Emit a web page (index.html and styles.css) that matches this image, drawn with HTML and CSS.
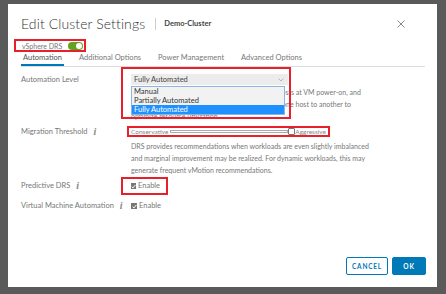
FILE: index.html
```html
<!DOCTYPE html>
<html lang="en">

<head>
  <meta charset="UTF-8">
  <title>Edit Cluster Settings</title>
  <link rel="stylesheet" href="styles.css">
</head>

<body>
  <div class="modal">
    <!-- Header -->
    <header class="modal-header">
      <h1>Edit Cluster Settings</h1>
      <span class="divider"></span>
      <span class="cluster-name">Demo-Cluster</span>
      <button class="close" aria-label="Close">
        <svg width="8" height="8" viewBox="0 0 8 8"><path d="M0.5 0.5 L7.5 7.5 M7.5 0.5 L0.5 7.5" stroke="#8c8c8c" stroke-width="1" fill="none"/></svg>
      </button>
    </header>

    <!-- DRS switch -->
    <div class="drs-toggle">
      <span>vSphere DRS</span>
      <span class="switch"><span class="knob"></span></span>
    </div>

    <!-- Tabs -->
    <nav class="tabs">
      <span class="tab active">Automation</span>
      <span class="tab">Additional Options</span>
      <span class="tab">Power Management</span>
      <span class="tab">Advanced Options</span>
    </nav>

    <!-- Form -->
    <div class="form">
      <div class="row">
        <label class="row-label">Automation Level</label>
        <div class="control level">
          <div class="select">
            <span>Fully Automated</span>
            <svg width="6" height="4" viewBox="0 0 6 4"><path d="M0.5 0.5 L3 3 L5.5 0.5" stroke="#aaa" stroke-width="0.8" fill="none"/></svg>
          </div>
          <p class="desc">DRS automatically places virtual machines onto hosts at VM power-on, and<br>virtual machines are automatically migrated from one host to another to<br>optimize resource utilization.</p>
          <ul class="listbox">
            <li>Manual</li>
            <li>Partially Automated</li>
            <li class="selected">Fully Automated</li>
          </ul>
          <span class="mark-level"></span>
        </div>
      </div>

      <div class="row row-threshold">
        <label class="row-label">Migration Threshold <i class="info">i</i></label>
        <div class="control">
          <div class="slider">
            <span class="slider-end">Conservative</span>
            <span class="track"></span>
            <span class="thumb"></span>
            <span class="slider-end">Aggressive</span>
          </div>
          <p class="desc">DRS provides recommendations when workloads are even slightly imbalanced and marginal improvement may be realized. For dynamic workloads, this may generate frequent vMotion recommendations.</p>
        </div>
      </div>

      <div class="row row-predictive">
        <label class="row-label">Predictive DRS <i class="info">i</i></label>
        <div class="control">
          <span class="check marked"><span class="box">
            <svg width="5" height="5" viewBox="0 0 5 5"><path d="M0.7 2.6 L2 3.9 L4.4 0.9" stroke="#fff" stroke-width="1" fill="none"/></svg>
          </span>Enable</span>
        </div>
      </div>

      <div class="row row-vm">
        <label class="row-label">Virtual Machine Automation <i class="info">i</i></label>
        <div class="control">
          <span class="check"><span class="box">
            <svg width="5" height="5" viewBox="0 0 5 5"><path d="M0.7 2.6 L2 3.9 L4.4 0.9" stroke="#fff" stroke-width="1" fill="none"/></svg>
          </span>Enable</span>
        </div>
      </div>
    </div>

    <!-- Footer -->
    <footer class="modal-footer">
      <button class="btn btn-outline">CANCEL</button>
      <button class="btn btn-primary">OK</button>
    </footer>
  </div>
</body>

</html>
```

FILE: styles.css
```css
/* General Styles */
body {
  margin: 0;
  padding: 4px 9px 7px 8px;
  background-color: #5a5a5a;
  font-family: 'Lato', 'Open Sans', sans-serif;
  font-size: 7.5px;
  line-height: 12px;
  color: #666;
}

/* Modal */
.modal {
  box-sizing: border-box;
  width: 429px;
  height: 283px;
  padding: 11px 12px 12px 13px;
  background-color: #fff;
  display: flex;
  flex-direction: column;
}

.modal-header {
  display: flex;
  align-items: center;
  height: 18px;
}

.modal-header h1 {
  margin: 0;
  font-size: 14px;
  font-weight: 300;
  color: #333;
  letter-spacing: 0.1px;
}

.divider {
  width: 1px;
  height: 12px;
  background-color: #ccc;
  margin: 0 8px 0 10px;
}

.cluster-name {
  font-size: 7.5px;
  font-weight: 700;
  color: #444;
}

.close {
  margin-left: auto;
  margin-right: 20px;
  padding: 0;
  border: none;
  background: none;
  display: flex;
}

/* DRS switch */
.drs-toggle {
  align-self: flex-start;
  display: flex;
  align-items: center;
  gap: 6px;
  box-sizing: border-box;
  width: 72px;
  height: 13px;
  margin: 6px 0 0 -7px;
  padding: 0 4px 0 6px;
  border: 2px solid #e8202c;
  color: #777;
  white-space: nowrap;
  font-size: 7px;
}

.switch {
  flex-shrink: 0;
  width: 15px;
  height: 8px;
  border-radius: 4px;
  background-color: #62a420;
  display: flex;
  justify-content: flex-end;
  align-items: center;
  padding: 0 1px;
  box-sizing: border-box;
}

.knob {
  width: 6px;
  height: 6px;
  border-radius: 50%;
  background-color: #fff;
}

/* Tabs */
.tabs {
  display: flex;
  gap: 13px;
  height: 14px;
  border-bottom: 1px solid #ddd;
}

.tab {
  padding: 0 2px;
  line-height: 11px;
  color: #777;
}

.tab.active {
  color: #555;
  border-bottom: 2px solid #0079b8;
}

/* Form */
.form {
  padding-top: 7px;
}

.row {
  display: flex;
}

.row-label {
  width: 110px;
  flex-shrink: 0;
  color: #777;
  display: flex;
  align-items: flex-start;
  gap: 6px;
}

.info {
  font-family: 'Liberation Serif', serif;
  font-size: 10px;
  font-weight: 700;
  color: #888;
}

.control {
  position: relative;
}

.desc {
  margin: 0;
  width: 250px;
  font-size: 7px;
  color: #777;
}

/* Automation level */
.select {
  box-sizing: border-box;
  width: 157px;
  height: 11px;
  padding: 0 4px 0 3px;
  background-color: #ececec;
  color: #444;
  display: flex;
  align-items: center;
  justify-content: space-between;
  margin-bottom: 1px;
}

.level .desc {
  white-space: nowrap;
}

.listbox {
  position: absolute;
  top: 12px;
  left: 0;
  box-sizing: border-box;
  width: 154px;
  margin: 0;
  padding: 0;
  list-style: none;
  background-color: #f2f2f2;
  border: 1px solid #8db4e2;
  color: #333;
}

.listbox li {
  height: 9px;
  line-height: 9px;
  padding-left: 2px;
}

.listbox li.selected {
  background-color: #1e90ff;
  color: #fff;
}

.mark-level {
  position: absolute;
  left: -10px;
  top: -7px;
  box-sizing: border-box;
  width: 170px;
  height: 52px;
  border: 2px solid #e8202c;
}

/* Threshold */
.row-threshold {
  margin-top: 4px;
}

.slider {
  box-sizing: border-box;
  width: 203px;
  height: 11px;
  margin: 0 0 3px -4px;
  padding: 0 2px;
  border: 2px solid #e8202c;
  display: flex;
  align-items: center;
}

.slider-end {
  font-size: 6.5px;
  color: #888;
  line-height: 7px;
}

.track {
  flex: 1;
  height: 3px;
  margin-left: 2px;
  border: 1px solid #aaa;
  box-sizing: border-box;
}

.thumb {
  box-sizing: border-box;
  width: 7px;
  height: 7px;
  border: 1px solid #777;
  border-radius: 1px;
  background-color: #fff;
}

/* Checkboxes */
.row-predictive {
  align-items: center;
  height: 18px;
  margin-top: 1px;
}

.row-vm {
  margin-top: 5px;
}

.check {
  display: inline-flex;
  align-items: center;
  gap: 2px;
  color: #777;
}

.check.marked {
  box-sizing: border-box;
  height: 18px;
  width: 47px;
  margin-left: -10px;
  padding: 0 8px;
  border: 2px solid #e8202c;
}

.box {
  width: 6px;
  height: 6px;
  background-color: #777;
  display: flex;
  align-items: center;
  justify-content: center;
}

/* Footer */
.modal-footer {
  margin-top: auto;
  display: flex;
  justify-content: flex-end;
  gap: 4px;
  margin-right: -1px;
}

.btn {
  height: 18px;
  font-family: 'Lato', sans-serif;
  font-size: 6.5px;
  font-weight: 700;
  letter-spacing: 0.8px;
  border-radius: 2px;
  border: 1px solid #0079b8;
  padding: 0;
}

.btn-outline {
  width: 42px;
  background-color: #fff;
  color: #0079b8;
}

.btn-primary {
  width: 34px;
  background-color: #0079b8;
  color: #fff;
}
```
